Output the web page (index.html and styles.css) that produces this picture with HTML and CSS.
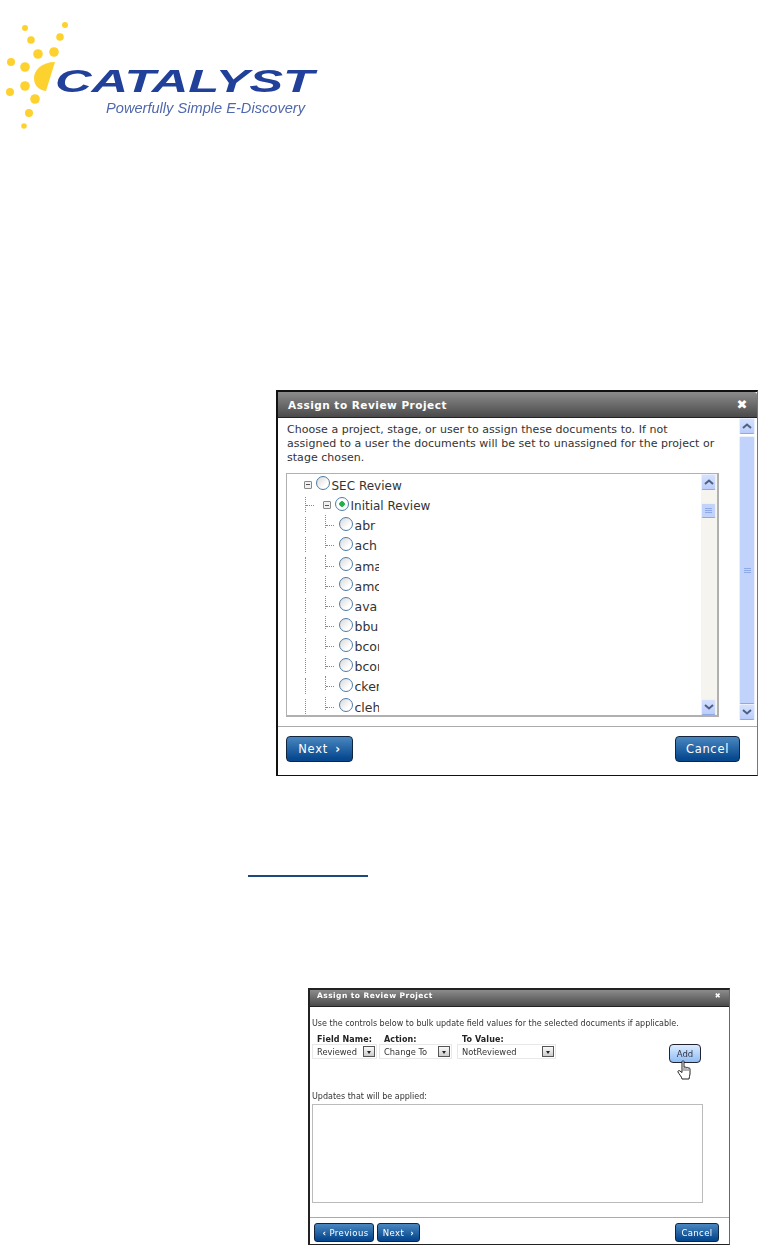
FILE: index.html
```html
<!DOCTYPE html>
<html lang="en">
<head>
<meta charset="utf-8">
<title>Catalyst - Assign to Review Project</title>
<link rel="stylesheet" href="styles.css">
</head>
<body>
<svg class="logo" width="330" height="131" viewBox="0 0 330 131">
  <g fill="#fdd22f">
    <circle cx="25" cy="28" r="3"/><circle cx="65" cy="25" r="3"/>
    <circle cx="31" cy="40" r="3.8"/><circle cx="60" cy="37" r="3.8"/>
    <circle cx="38" cy="54" r="4.8"/><circle cx="54" cy="52" r="4.8"/>
    <circle cx="11" cy="62" r="4"/><circle cx="25" cy="67" r="4.8"/>
    <circle cx="25" cy="86" r="4.8"/><circle cx="10" cy="92" r="4"/>
    <circle cx="35" cy="99" r="4.8"/><circle cx="29" cy="113" r="4"/>
    <circle cx="24" cy="126" r="2.8"/>
    <path d="M55 62C42 62 34 70 34 78C34 85 38 90 46 91Z"/>
  </g>
  <text class="logo-name" x="55" y="92" textLength="259" lengthAdjust="spacingAndGlyphs">CATALYST</text>
  <text class="logo-tag" x="106" y="113" textLength="199" lengthAdjust="spacingAndGlyphs">Powerfully Simple E-Discovery</text>
</svg>

<section class="dialog dialog-large">
  <header class="title-bar"><span>Assign to Review Project</span><b class="close">✖</b></header>
  <div class="main">
    <div class="content">
      <p class="intro">Choose a project, stage, or user to assign these documents to. If not assigned to a user the documents will be set to unassigned for the project or stage chosen.</p>
      <div class="tree">
        <div class="tree-rows">
          <div class="row row-root"><i class="expander"></i><i class="radio"></i><span>SEC Review</span></div>
          <div class="row row-stage"><i class="guide-v"></i><i class="guide-h"></i><i class="expander"></i><i class="radio radio-on"></i><span>Initial Review</span></div>
          <div class="row row-leaf"><i class="guide-v"></i><i class="guide-v guide-two"></i><i class="guide-h"></i><i class="radio"></i><span class="clip">abr</span></div>
          <div class="row row-leaf"><i class="guide-v"></i><i class="guide-v guide-two"></i><i class="guide-h"></i><i class="radio"></i><span class="clip">ach</span></div>
          <div class="row row-leaf"><i class="guide-v"></i><i class="guide-v guide-two"></i><i class="guide-h"></i><i class="radio"></i><span class="clip">ama</span></div>
          <div class="row row-leaf"><i class="guide-v"></i><i class="guide-v guide-two"></i><i class="guide-h"></i><i class="radio"></i><span class="clip">amc</span></div>
          <div class="row row-leaf"><i class="guide-v"></i><i class="guide-v guide-two"></i><i class="guide-h"></i><i class="radio"></i><span class="clip">ava</span></div>
          <div class="row row-leaf"><i class="guide-v"></i><i class="guide-v guide-two"></i><i class="guide-h"></i><i class="radio"></i><span class="clip">bbu</span></div>
          <div class="row row-leaf"><i class="guide-v"></i><i class="guide-v guide-two"></i><i class="guide-h"></i><i class="radio"></i><span class="clip">bcor</span></div>
          <div class="row row-leaf"><i class="guide-v"></i><i class="guide-v guide-two"></i><i class="guide-h"></i><i class="radio"></i><span class="clip">bcor</span></div>
          <div class="row row-leaf"><i class="guide-v"></i><i class="guide-v guide-two"></i><i class="guide-h"></i><i class="radio"></i><span class="clip">cker</span></div>
          <div class="row row-leaf"><i class="guide-v"></i><i class="guide-v guide-two"></i><i class="guide-h"></i><i class="radio"></i><span class="clip">cleh</span></div>
        </div>
        <div class="scroll scroll-inner">
          <div class="scroll-btn"><svg width="10" height="6" viewBox="0 0 10 6"><path d="M1 5L5 1.5L9 5" class="chev"/></svg></div>
          <div class="scroll-gap"></div>
          <div class="scroll-thumb"><i></i><i></i><i></i></div>
          <div class="scroll-rest"></div>
          <div class="scroll-btn"><svg width="10" height="6" viewBox="0 0 10 6"><path d="M1 1L5 4.5L9 1" class="chev"/></svg></div>
        </div>
      </div>
    </div>
    <div class="scroll scroll-outer">
      <div class="scroll-btn"><svg width="10" height="6" viewBox="0 0 10 6"><path d="M1 5L5 1.5L9 5" class="chev"/></svg></div>
      <div class="scroll-thumb scroll-thumb-long"><i></i><i></i><i></i></div>
      <div class="scroll-btn"><svg width="10" height="6" viewBox="0 0 10 6"><path d="M1 1L5 4.5L9 1" class="chev"/></svg></div>
    </div>
  </div>
  <footer class="footer">
    <button class="btn btn-next">Next <span class="arrow">›</span></button>
    <button class="btn btn-cancel">Cancel</button>
  </footer>
</section>

<div class="link-line"></div>

<section class="dialog dialog-small">
  <header class="title-bar"><span>Assign to Review Project</span><b class="close">✖</b></header>
  <div class="small-main">
    <p class="small-intro">Use the controls below to bulk update field values for the selected documents if applicable.</p>
    <div class="fields">
      <div class="field field-name">
        <label>Field Name:</label>
        <div class="select"><span>Reviewed</span><i class="drop"></i></div>
      </div>
      <div class="field field-action">
        <label>Action:</label>
        <div class="select"><span>Change To</span><i class="drop"></i></div>
      </div>
      <div class="field field-value">
        <label>To Value:</label>
        <div class="select"><span>NotReviewed</span><i class="drop"></i></div>
      </div>
      <button class="add">Add
        <svg class="hand" width="16" height="20" viewBox="0 0 16 20"><path d="M5 1.5C5 .6 7 .6 7 1.5V7.5C7.6 6.6 9 6.8 9 7.8C9.6 7 11 7.2 11 8.2C11.6 7.6 13 7.8 13 9V14C13 16 12 17 12 19H5C5 17 1.5 13.5 1 12C.6 10.6 2 10.2 3 11L5 12.5Z" fill="#fff" stroke="#222" stroke-width="1"/><path d="M7 8V11M9 8V11M11 8.5V11" stroke="#222" stroke-width=".7"/></svg>
      </button>
    </div>
    <p class="updates-label">Updates that will be applied:</p>
    <div class="updates"></div>
  </div>
  <footer class="footer footer-small">
    <button class="btn btn-prev"><span class="arrow">‹</span> Previous</button>
    <button class="btn btn-next2">Next <span class="arrow">›</span></button>
    <button class="btn btn-cancel2">Cancel</button>
  </footer>
</section>
</body>
</html>
```
FILE: styles.css
```css
* { box-sizing: border-box; }
html, body { margin: 0; padding: 0; background: #fff; }
body { font-family: "DejaVu Sans", Verdana, sans-serif; color: #333; overflow: hidden; height: 1245px; }
p { margin: 0; }

.logo { display: block; filter: blur(.6px); }
.logo-name { font: italic bold 32px "Liberation Sans", Arial, sans-serif; fill: #21409a; }
.logo-tag { font: italic 14px "Liberation Sans", Arial, sans-serif; fill: #5068ac; }

.dialog { background: #fff; display: flex; flex-direction: column; }
.title-bar {
  display: flex; align-items: center; justify-content: space-between;
  background: linear-gradient(#8c8c8c, #4a4a4a);
  color: #fff; font-weight: bold;
  border-bottom: 1px solid #222;
}

/* Large dialog */
.dialog-large {
  width: 482px; height: 386px; margin: 259px 0 0 276px;
  border: 2px solid #111; border-right: 1px solid #777; border-bottom-width: 1px;
  border-bottom-color: #111;
}
.dialog-large .title-bar { height: 26px; padding: 0 9px 0 10px; font-size: 10.5px; letter-spacing: .5px; border-top-right-radius: 3px; flex: none; }
.close { font-size: 13px; }
.main { height: 308px; display: flex; flex: none; }
.content { width: 433px; margin-left: 8px; padding-top: 5px; }
.intro { font-size: 11px; letter-spacing: .04px; line-height: 14px; height: 50px; padding-left: 1px; color: #333; }
.tree {
  height: 244px; border: 1px solid #b0b0b0; border-right-width: 2px; border-bottom-width: 2px;
  display: flex; justify-content: space-between; overflow: hidden;
}
.tree-rows { width: 416px; overflow: hidden; }
.row { height: 20.16px; position: relative; display: flex; align-items: center; font-size: 12px; color: #333; }
.row span { line-height: 20px; padding-top: 2px; }
.row-root { padding-left: 17px; height: 21px; }
.row-stage { padding-left: 36px; }
.row-leaf { padding-left: 52px; font-size: 12.5px; }
.clip { display: block; width: 24px; overflow: hidden; }
.expander {
  width: 8px; height: 8px; border: 1px solid #888; border-radius: 1px; margin-right: 4px;
  background: linear-gradient(#555, #555) center / 4px 1px no-repeat, #f2f2f2;
}
.radio {
  width: 14px; height: 14px; border-radius: 50%; border: 1.5px solid #4d7ba6; margin: -3px 1.5px 0 0;
  background: linear-gradient(135deg, #d8d8d8, #fff 70%);
  flex: none;
}
.radio-on { background: radial-gradient(circle, #22b04a 0 2.5px, #fff 3px); }
.guide-v { position: absolute; left: 18px; top: 2px; bottom: 3px; border-left: 1px dotted #888; }
.guide-two { left: 38px; top: 0; bottom: 7px; }
.guide-h { position: absolute; top: 50%; width: 8px; border-top: 1px dotted #888; left: 19px; }
.row-leaf .guide-h { left: 39px; }

.scroll { display: flex; flex-direction: column; }
.scroll-inner { width: 16px; background: #f5f4ee; padding-right: 1px; }
.scroll-outer { width: 16px; height: 302px; margin-left: auto; margin-right: 2px; }
.scroll-btn {
  height: 16px; background: linear-gradient(#d5e1fd, #bccdfa); border: 1px solid #eaf0ff; border-bottom-color: #8fa8e8; border-radius: 2px;
  display: flex; align-items: center; justify-content: center; flex: none;
}
.chev { fill: none; stroke: #4d6185; stroke-width: 2; }
.scroll-gap { height: 13px; flex: none; }
.scroll-rest { flex: 1; }
.scroll-thumb {
  height: 15px; background: #c1d2fb; border: 1px solid #eaf0ff; border-bottom-color: #8fa8e8; border-radius: 2px;
  display: flex; flex-direction: column; align-items: center; justify-content: center; gap: 1px; flex: none;
}
.scroll-thumb i { display: block; width: 7px; height: 1px; background: #8ea9ea; }
.scroll-thumb-long { flex: 1; margin-top: 2px; }

.footer { border-top: 1px solid #aaa; display: flex; align-items: flex-start; flex: none; }
.dialog-large .footer { height: 49px; padding: 9px 17px 0 8px; justify-content: space-between; }
.btn {
  background: linear-gradient(#4a87c0, #07488f 90%);
  border: 1px solid #10253f; border-radius: 4px; color: #fff;
  font-family: "DejaVu Sans", Verdana, sans-serif; font-size: 11.5px; letter-spacing: .7px; padding: 0; text-align: center;
}
.arrow { font-weight: bold; margin-left: 3px; }
.btn-next { width: 67px; height: 26px; }
.btn-cancel { width: 65px; height: 26px; }

.link-line { width: 120px; height: 2px; margin: 99px 0 0 248px; background: #1f497d; }

/* Small dialog */
.dialog-small {
  width: 422px; height: 257px; margin: 111px 0 0 308px;
  border: 2px solid #222; border-right: 1px solid #666; border-bottom-width: 1px;
  filter: blur(.4px);
}
.dialog-small .title-bar { height: 17px; padding: 0 8px 5px 7px; font-size: 7.5px; letter-spacing: .45px; flex: none; }
.dialog-small .close { font-size: 7px; }
.small-main { height: 210px; padding: 11px 0 0 2px; flex: none; }
.small-intro { font-size: 8px; line-height: 11px; color: #333; }
.fields { display: flex; align-items: flex-start; margin-top: 6px; height: 55px; }
.field { display: flex; flex-direction: column; }
.field label { font-size: 8px; font-weight: bold; line-height: 10px; height: 9px; padding-left: 5px; letter-spacing: .1px; color: #222; }
.field-name { width: 65px; margin-right: 2px; }
.field-action { width: 73px; margin-right: 5px; }
.field-value { width: 99px; }
.select {
  height: 15px; border: 1px solid #e8e8e8; display: flex; align-items: center; justify-content: space-between;
  padding: 0 1px 0 4px; font-size: 8.3px; color: #333;
}
.drop {
  width: 12px; height: 11px; border: 1px solid #555; background: linear-gradient(#fafafa, #ccc);
  position: relative; flex: none;
}
.drop::after {
  content: ""; position: absolute; left: 2.5px; top: 4px;
  border: 2.5px solid transparent; border-top: 3px solid #222; border-bottom: 0;
}
.add {
  width: 32px; height: 19px; margin: 9px 0 0 113px; position: relative;
  background: linear-gradient(#dcecff, #8ebdf5);
  border: 1px solid #223; border-radius: 4px; padding: 0;
  font-family: "DejaVu Sans", Verdana, sans-serif; font-size: 8.5px; color: #334;
}
.hand { position: absolute; left: 7px; top: 15px; }
.updates-label { font-size: 8px; line-height: 11px; margin-top: 1px; color: #333; }
.updates { width: 391px; height: 99px; margin-top: 2px; border: 1px solid #bbb; }
.footer-small { padding: 5px 10px 0 4px; height: 28px; gap: 3px; }
.footer-small .btn { font-size: 8.5px; height: 19px; letter-spacing: .4px; border-radius: 3px; }
.btn-prev { width: 60px; }
.btn-next2 { width: 43px; }
.btn-cancel2 { width: 44px; margin-left: auto; }
```
